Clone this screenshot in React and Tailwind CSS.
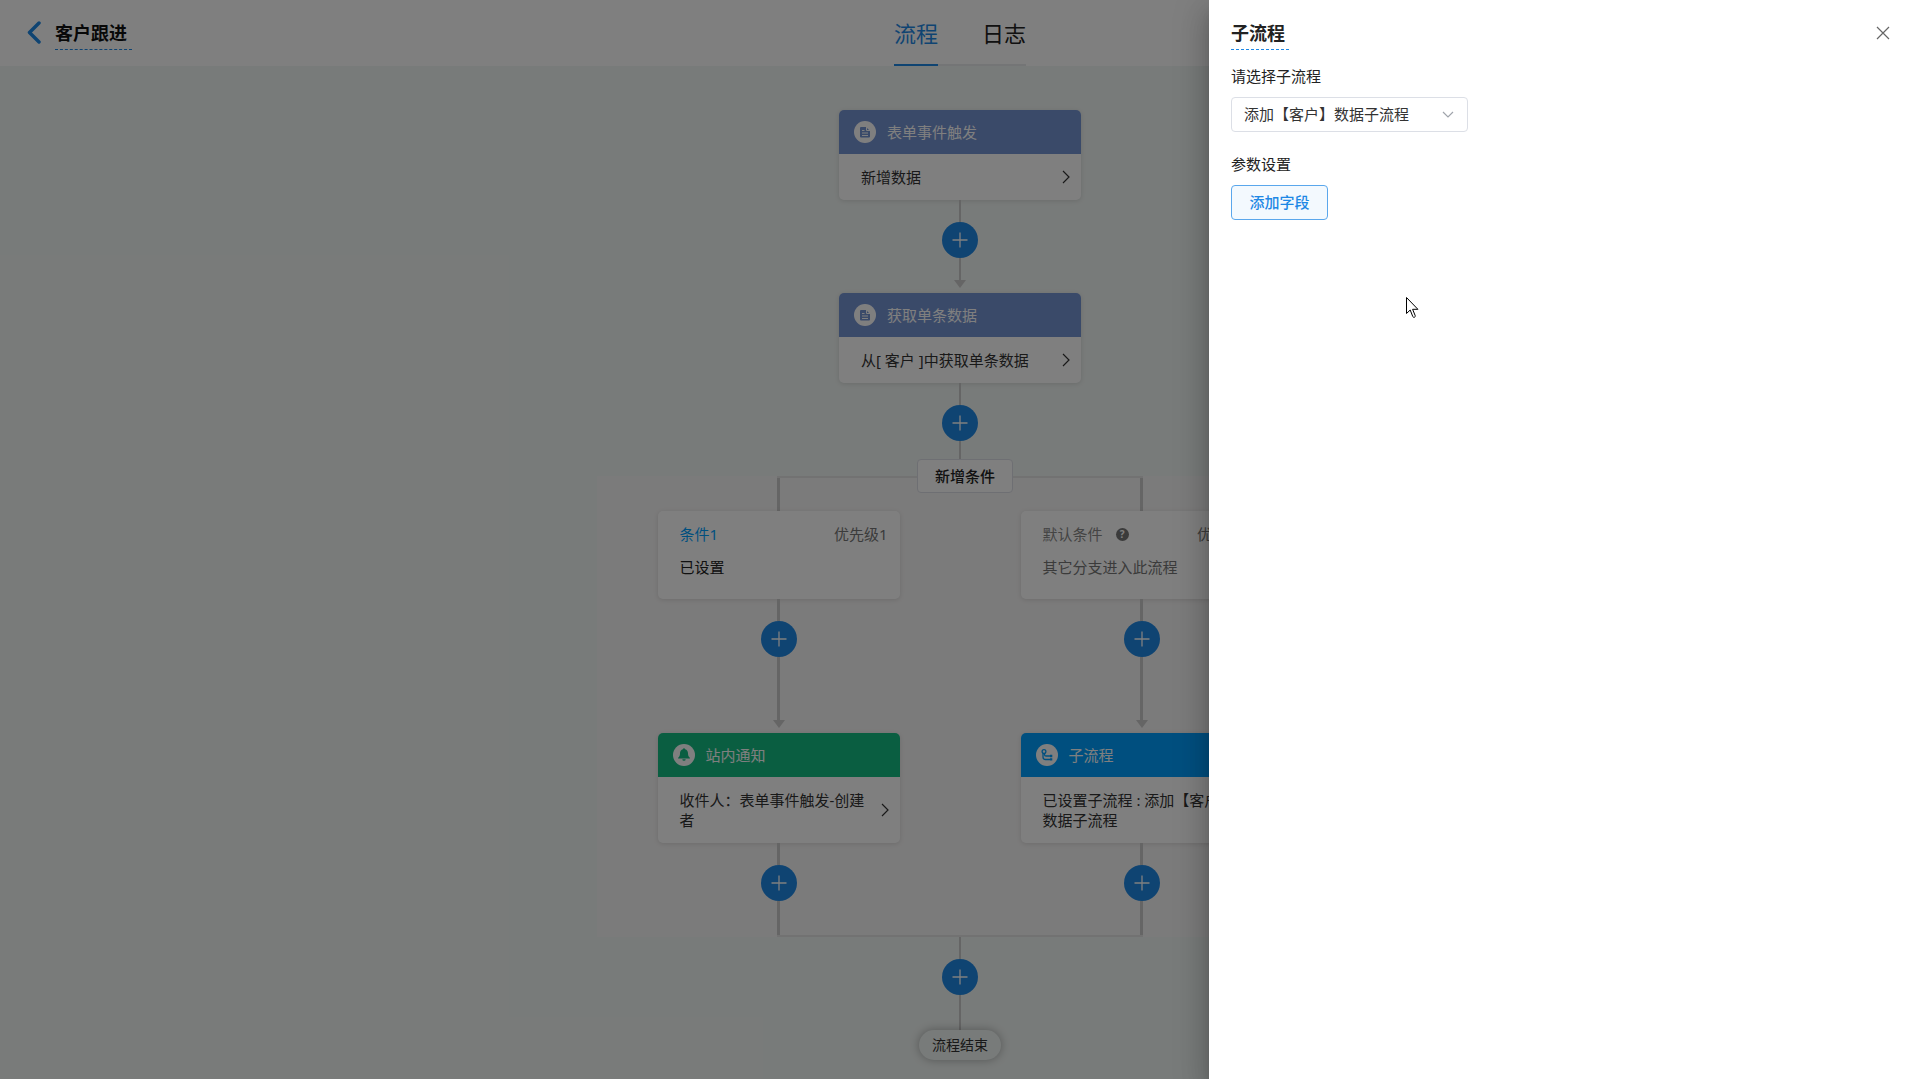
import React, { useState } from "react";

const font =
  "font-['Noto_Sans','Noto_Sans_CJK_SC',sans-serif]";

function DocIcon() {
  return (
    <svg viewBox="0 0 22 22" className="size-[22px] shrink-0" aria-hidden="true">
      <circle cx="11" cy="11" r="11" fill="#fff" />
      <path d="M7 6h5l4 4v5.500a1 1 0 0 1-1 1H7a1 1 0 0 1-1-1V7a1 1 0 0 1 1-1z" fill="#7594d3" />
      <path d="M12.500 5.500v4h4" fill="none" stroke="#fff" strokeWidth="1" />
      <path d="M8 9.500h2.500M8 12h6M8 14.500h6" stroke="#fff" strokeWidth="1.100" />
    </svg>
  );
}

function BellIcon() {
  return (
    <svg viewBox="0 0 22 22" className="size-[22px] shrink-0" aria-hidden="true">
      <circle cx="11" cy="11" r="11" fill="#fff" />
      <path
        d="M11 4.200c.6 0 1 .4 1.100 1C14 5.800 15 7.400 15 9.200c0 2.300.6 3.600 1.900 4.600v.7H5.100v-.7C6.400 12.800 7 11.500 7 9.200c0-1.800 1-3.400 2.900-4 .1-.6.5-1 1.100-1z"
        fill="#15bc83"
      />
      <path d="M9.300 15.300h3.400a1.700 1.500 0 0 1-3.400 0z" fill="#15bc83" />
    </svg>
  );
}

function FlowIcon() {
  return (
    <svg viewBox="0 0 22 22" className="size-[22px] shrink-0" aria-hidden="true">
      <circle cx="11" cy="11" r="11" fill="#fff" />
      <g fill="none" stroke="#009fff" strokeWidth="1.300">
        <circle cx="8" cy="7.500" r="1.900" />
        <path d="M7 9.400v3.600q0 2.500 2.500 2.500H14M8.500 9.400v1q0 1.600 1.600 1.600H14" />
      </g>
      <path d="M14 10.800h2.300v2.400H14zM14 14.200h2.300v2.400H14z" fill="#009fff" />
    </svg>
  );
}

function Chevron() {
  return (
    <svg viewBox="0 0 8 14" className="h-3.5 w-2 shrink-0" fill="none" stroke="#333" strokeWidth="1.200" aria-hidden="true">
      <path d="M1 1l6 6-6 6" />
    </svg>
  );
}

function AddButton() {
  return (
    <button type="button" aria-label="添加节点" className="flex size-9 shrink-0 items-center justify-center rounded-full bg-[#1e88e5]">
      <svg viewBox="0 0 16 16" className="size-4" stroke="#fff" strokeWidth="1.300" aria-hidden="true">
        <path d="M8 .5v15M.5 8h15" />
      </svg>
    </button>
  );
}

function Arrow() {
  return (
    <svg viewBox="0 0 12 8" className="mb-[5px] h-2 w-3 shrink-0" aria-hidden="true">
      <path d="M0 0h12L6 8z" fill="#cacaca" />
    </svg>
  );
}

const card = "w-[242px] overflow-hidden rounded-[5px] bg-white shadow-[0_1px_5px_rgba(0,0,0,0.12)]";

function Node({ icon, title, color, children }) {
  return (
    <section className={card}>
      <header className={`flex h-11 items-center gap-[11px] pl-[15px] text-white ${color}`}>
        {icon}
        <h2>{title}</h2>
      </header>
      <button type="button" className="flex w-full items-center justify-between py-3 pl-[22px] pr-[11px] text-left leading-5 text-[#333]">
        <span className="w-[196px] py-px">{children}</span>
        <Chevron />
      </button>
    </section>
  );
}

function Branch({ head, text, textColor, node }) {
  return (
    <div className="flex w-[363px] flex-col items-center">
      <div className="h-[33px] w-[3px] bg-[#cacaca]" />
      <section className={`${card} h-[88px] pl-[22px] pr-3 pt-3`}>
        <div className="flex items-center justify-between leading-[22px]">{head}</div>
        <p className={`mt-[11px] leading-[22px] ${textColor}`}>{text}</p>
      </section>
      <div className="h-[22px] w-[3px] bg-[#cacaca]" />
      <AddButton />
      <div className="h-[63px] w-[3px] bg-[#cacaca]" />
      <Arrow />
      {node}
      <div className="h-[22px] w-[3px] bg-[#cacaca]" />
      <AddButton />
      <div className="h-[34px] w-[3px] bg-[#cacaca]" />
    </div>
  );
}

function Header() {
  return (
    <header className="grid h-[66px] grid-cols-3 bg-white">
      <div className="flex items-center pl-[26px]">
        <button type="button" aria-label="返回" className="mr-[13px]">
          <svg viewBox="0 0 16 24" className="h-6 w-4" fill="none" stroke="#1e88e5" strokeWidth="3.500" strokeLinecap="round" strokeLinejoin="round" aria-hidden="true">
            <path d="M13 2L3.500 11.500L13 21" />
          </svg>
        </button>
        <h1 className="h-[33px] w-[77px] border-b border-dashed border-[#1e88e5] text-lg font-semibold leading-[33px] text-[#111]">客户跟进</h1>
      </div>
      <nav className="flex justify-center text-[22px] text-[#222]">
        <div className="flex gap-11 border-b-2 border-[#e8eaec]">
          <a href="#flow" className="-mb-0.5 flex items-center border-b-2 border-[#1e88e5] pt-0.5 text-[#1e88e5]">流程</a>
          <a href="#log" className="flex items-center pt-0.5">日志</a>
        </div>
      </nav>
    </header>
  );
}

function Canvas() {
  return (
    <main className="flex flex-1 flex-col items-center bg-[#f1f6f4] pt-11">
      <Node icon={<DocIcon />} title="表单事件触发" color="bg-[#7594d3]">新增数据</Node>
      <div className="h-[22px] w-0.5 bg-[#cacaca]" />
      <AddButton />
      <div className="h-[22px] w-0.5 bg-[#cacaca]" />
      <Arrow />
      <Node icon={<DocIcon />} title="获取单条数据" color="bg-[#7594d3]">从[ 客户 ]中获取单条数据</Node>
      <div className="h-[22px] w-0.5 bg-[#cacaca]" />
      <AddButton />
      <div className="h-[18px] w-0.5 bg-[#cacaca]" />
      <button type="button" className="z-10 -mb-[17px] ml-[10px] h-[34px] w-24 rounded border border-[#dcdfe6] bg-white font-medium text-[#222]">
        新增条件
      </button>
      <div className="flex flex-col items-center bg-[#f7f6f6]">
        <div className="h-0.5 w-[366px] bg-[#e4e4e4]" />
        <div className="flex">
          <Branch
            head={<><span className="text-[#009fff]">条件1</span><span className="text-[#777]">优先级1</span></>}
            text="已设置"
            textColor="text-[#222]"
            node={<Node icon={<BellIcon />} title="站内通知" color="bg-[#15bc83]">收件人：表单事件触发-创建者</Node>}
          />
          <Branch
            head={
              <>
                <span className="flex items-center gap-[13px] text-[#888]">
                  默认条件
                  <span className="flex size-[13px] items-center justify-center rounded-full bg-[#777] text-[10px] font-bold leading-none text-white">?</span>
                </span>
                <span className="text-[#777]">优先级2</span>
              </>
            }
            text="其它分支进入此流程"
            textColor="text-[#777]"
            node={<Node icon={<FlowIcon />} title="子流程" color="bg-[#009fff]">已设置子流程 : 添加【客户】数据子流程</Node>}
          />
        </div>
        <div className="h-0.5 w-[366px] bg-[#e4e4e4]" />
      </div>
      <div className="h-[22px] w-0.5 bg-[#cacaca]" />
      <AddButton />
      <div className="h-[35px] w-0.5 bg-[#cacaca]" />
      <div className="mb-[19px] flex h-[30px] items-center rounded-full bg-[#f1f6f4] px-[13px] text-sm text-[#333] shadow-[0_0_10px_rgba(0,0,0,0.3)]">流程结束</div>
    </main>
  );
}

function Drawer() {
  const [value, setValue] = useState("a");
  return (
    <aside className="absolute inset-y-0 right-0 w-[37%] min-w-[711px] bg-white px-[22px] pt-[17px] text-[#222] shadow-[0_9px_11px_-5px_rgba(0,0,0,0.2),0_18px_26px_2px_rgba(0,0,0,0.14),0_7px_33px_6px_rgba(0,0,0,0.12)]">
      <div className="flex items-start justify-between">
        <h2 className="h-[33px] w-[58px] border-b border-dashed border-[#1e88e5] text-lg font-bold leading-[33px]">子流程</h2>
        <button type="button" aria-label="关闭" className="mr-2 mt-[9px]">
          <svg viewBox="0 0 14 14" className="size-3.5" stroke="#666" strokeWidth="1.200" aria-hidden="true">
            <path d="M1 1l12 12M13 1L1 13" />
          </svg>
        </button>
      </div>
      <label htmlFor="subflow" className="mt-[15px] block leading-[22px]">请选择子流程</label>
      <div className="mt-[10px] grid w-[237px] items-center">
        <select
          id="subflow"
          value={value}
          onChange={(e) => setValue(e.target.value)}
          className="col-start-1 row-start-1 h-[35px] w-full appearance-none rounded border border-[#dcdfe6] bg-white pl-3 text-[#333]"
        >
          <option value="a">添加【客户】数据子流程</option>
        </select>
        <svg viewBox="0 0 12 8" className="pointer-events-none col-start-1 row-start-1 mr-3.5 h-2 w-3 justify-self-end" fill="none" stroke="#a0a4ab" strokeWidth="1.200" aria-hidden="true">
          <path d="M1 1l5 5 5-5" />
        </svg>
      </div>
      <p className="mt-[21px] leading-[22px]">参数设置</p>
      <button type="button" className="mt-[10px] h-[35px] w-[97px] rounded border border-[#5aa7ec] bg-[#f3f9fe] font-medium text-[#1e88e5]">添加字段</button>
      <svg viewBox="0 0 13 22" className="absolute left-[197px] top-[297px] h-[22px] w-[13px]" aria-hidden="true">
        <path d="M.5.500v16l3.700-3.500 2.600 6.600c.8 1.500 3 .5 2.400-1L6.600 12.300h5.300z" fill="#fff" stroke="#000" strokeWidth="1" />
      </svg>
    </aside>
  );
}

export default function App() {
  return (
    <div className={`relative flex min-h-screen flex-col overflow-hidden text-[15px] ${font}`}>
      <Header />
      <Canvas />
      <div className="absolute inset-0 z-20 bg-black/50">
        <Drawer />
      </div>
    </div>
  );
}
